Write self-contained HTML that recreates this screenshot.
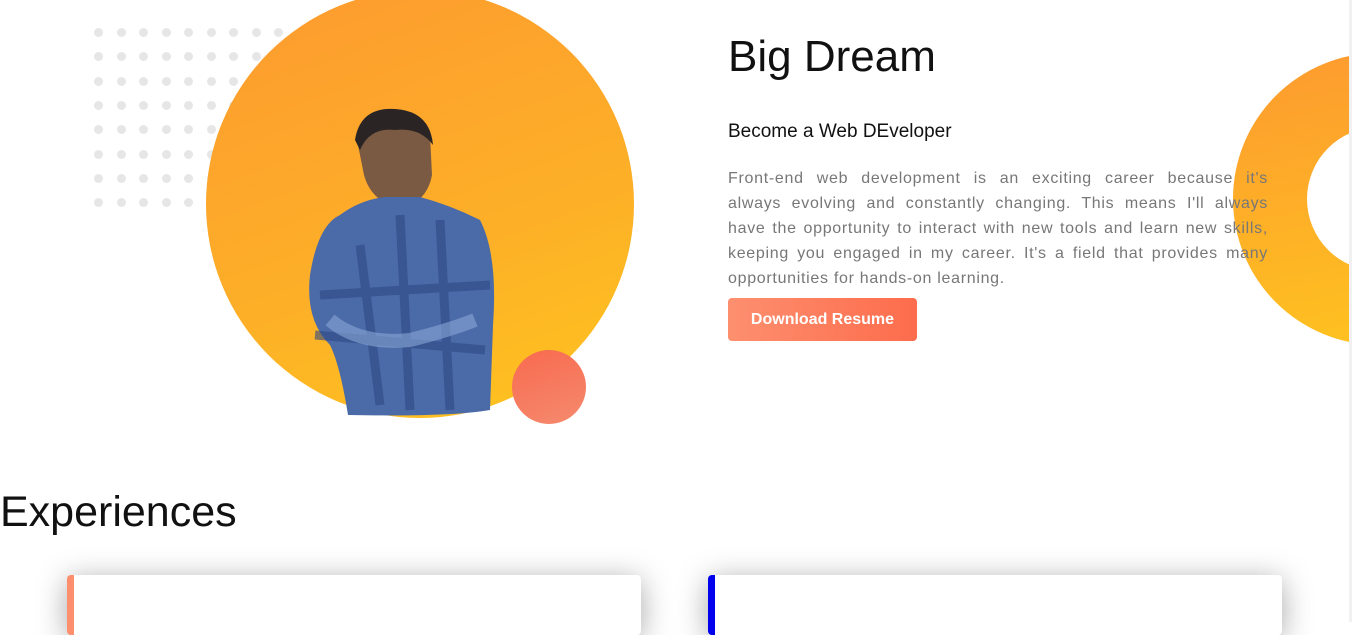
<!DOCTYPE html>
<html><head><style>
body{margin:0;width:1352px;height:622px;overflow:hidden;background:#fff;font-family:"Liberation Sans",sans-serif;position:relative}
.a{position:absolute}
.dot{position:absolute;width:9px;height:9px;border-radius:50%;background:#e6e6e6}
.ln{height:25px;text-align:justify;text-align-last:justify;white-space:nowrap}
.ln.l{text-align-last:left}
</style></head><body>
<div id="dots"></div>
<script>
var d=document.getElementById('dots'),h='';
for(var r=0;r<8;r++)for(var c=0;c<9;c++)h+='<div class="dot" style="left:'+(94+c*22.5)+'px;top:'+(28+r*24.3)+'px"></div>';
d.innerHTML=h;
</script>
<div class="a" style="left:206px;top:-10px;width:428px;height:428px;border-radius:50%;background:linear-gradient(160deg,#fd9a30,#fdb027 60%,#fec51e)"></div>
<svg class="a" style="left:300px;top:105px" width="200" height="315" viewBox="0 0 200 315">
<path d="M58 40 Q55 8 85 4 Q120 2 130 30 L132 70 Q128 92 110 100 L90 100 Q70 92 64 70 Z" fill="#7a5a42"/>
<path d="M55 35 Q60 2 95 4 Q130 6 133 40 Q120 22 95 25 Q70 22 60 45 Z" fill="#2a2424"/>
<path d="M40 110 Q60 95 85 92 L120 92 Q150 100 180 115 Q198 150 193 220 L190 305 Q150 312 48 310 Q40 260 30 240 Q5 215 10 170 Q18 120 40 110Z" fill="#4a6aa8"/>
<path d="M60 140 L80 300 M100 110 L110 305 M140 115 L150 305 M20 190 L190 180 M15 230 L185 245" stroke="#2e4a86" stroke-width="9" opacity=".6"/>
<path d="M30 215 Q60 240 110 235 Q150 225 175 215" stroke="#8aa6d6" stroke-width="14" fill="none" opacity=".6"/>
</svg>
<div class="a" style="left:512px;top:350px;width:74px;height:74px;border-radius:50%;background:linear-gradient(160deg,#f86a4f,#f58a6e)"></div>
<div class="a" style="left:1233px;top:53px;width:292px;height:292px;border-radius:50%;box-sizing:border-box;border:74px solid transparent;background:linear-gradient(#fff,#fff) padding-box,linear-gradient(170deg,#fd9a30,#fec51e) border-box"></div>
<div class="a" style="left:1349px;top:0;width:3px;height:622px;background:#f1f1f1"></div>
<div class="a" style="left:728px;top:32px;font-size:44px;color:#111">Big Dream</div>
<div class="a" style="left:728px;top:121px;font-size:19px;color:#111">Become a Web DEveloper</div>
<div class="a" style="left:728px;top:166px;width:540px;font-size:16px;line-height:25px;color:#777;letter-spacing:.7px">
<div class="ln">Front-end web development is an exciting career because it's</div>
<div class="ln">always evolving and constantly changing. This means I'll always</div>
<div class="ln">have the opportunity to interact with new tools and learn new skills,</div>
<div class="ln">keeping you engaged in my career. It's a field that provides many</div>
<div class="ln l">opportunities for hands-on learning.</div>
</div>
<div class="a" style="left:728px;top:298px;width:189px;height:43px;border-radius:4px;background:linear-gradient(90deg,#fd8f6f,#fd6c4c);color:#fff;font-size:16px;font-weight:bold;line-height:43px;text-align:center">Download Resume</div>
<div class="a" style="left:0;top:488px;font-size:43px;color:#111">Experiences</div>
<div class="a" style="left:67px;top:575px;width:574px;height:60px;box-sizing:border-box;background:#fff;border-left:7px solid #fd8f6f;border-radius:4px;box-shadow:0 5px 30px rgba(0,0,0,.35)"></div>
<div class="a" style="left:708px;top:575px;width:574px;height:60px;box-sizing:border-box;background:#fff;border-left:7px solid #0000ee;border-radius:4px;box-shadow:0 5px 30px rgba(0,0,0,.35)"></div>
</body></html>
